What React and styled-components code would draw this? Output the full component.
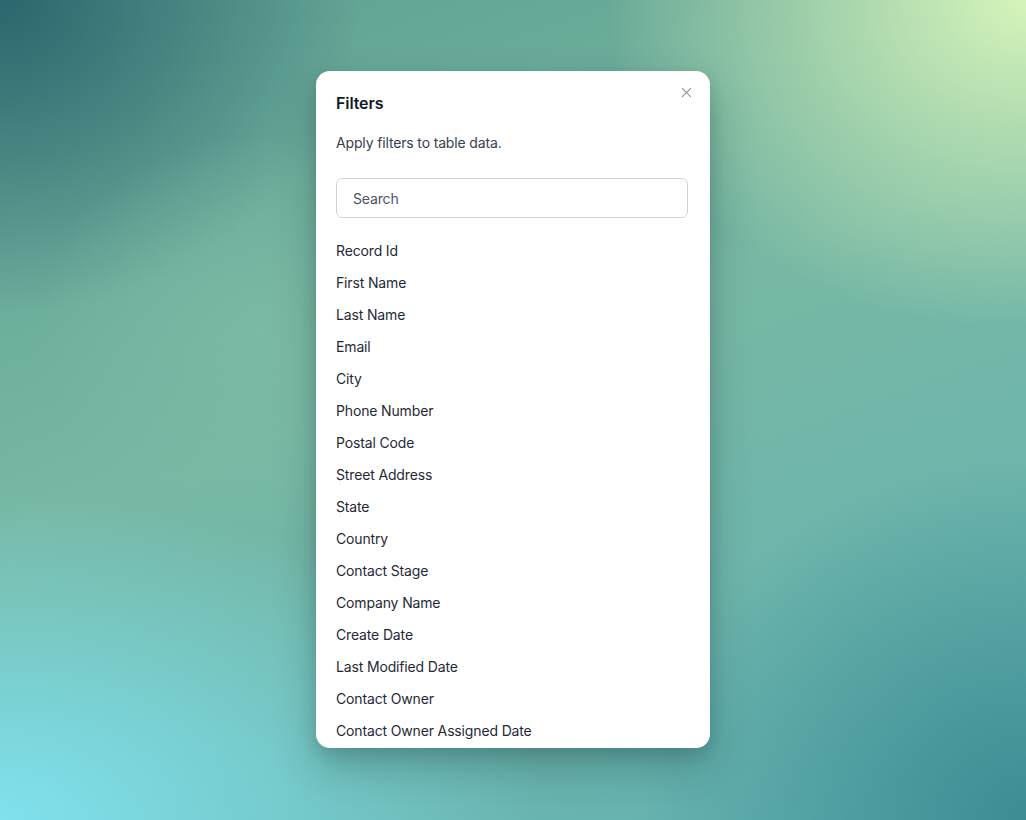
import React, { useState } from 'react'
import styled, { createGlobalStyle } from 'styled-components'

const GlobalStyle = createGlobalStyle`
  html, body {
    margin: 0;
    padding: 0;
    height: 100%;
  }
  body {
    font-family: 'Inter', 'Liberation Sans', sans-serif;
    -webkit-font-smoothing: antialiased;
  }
  #root {
    height: 100%;
  }
`

const Backdrop = styled.div`
  width: 1026px;
  height: 820px;
  display: flex;
  justify-content: center;
  align-items: flex-start;
  padding-top: 71px;
  box-sizing: border-box;
  overflow: hidden;
  background:
    radial-gradient(ellipse 300px 260px at 260px 330px, rgba(128, 190, 166, 0.6), rgba(128, 190, 166, 0) 75%),
    radial-gradient(ellipse 560px 440px at 1026px 0px, rgba(214, 244, 186, 1), rgba(214, 244, 186, 0) 75%),
    radial-gradient(ellipse 700px 420px at 0px 820px, rgba(128, 226, 238, 1), rgba(128, 226, 238, 0) 78%),
    radial-gradient(ellipse 480px 420px at 0px 0px, rgba(44, 102, 110, 1), rgba(44, 102, 110, 0) 75%),
    radial-gradient(ellipse 520px 480px at 1026px 820px, rgba(60, 140, 146, 1), rgba(60, 140, 146, 0) 75%),
    linear-gradient(160deg, #5e9e90 0%, #78b8a4 45%, #62b2b4 100%);
`

const Dialog = styled.div`
  position: relative;
  width: 394px;
  height: 677px;
  background: #ffffff;
  border-radius: 14px;
  box-shadow: 0 20px 40px rgba(20, 50, 50, 0.28), 0 6px 14px rgba(20, 50, 50, 0.14);
  padding: 20px 22px 0 20px;
  box-sizing: border-box;
  display: flex;
  flex-direction: column;
  overflow: hidden;
`

const CloseButton = styled.button`
  position: absolute;
  top: 13px;
  right: 16px;
  width: 16px;
  height: 16px;
  padding: 0;
  border: 0;
  background: none;
  color: #8b929c;
  display: flex;
  align-items: center;
  justify-content: center;
  cursor: pointer;
`

const Title = styled.h2`
  margin: 0;
  font-size: 16px;
  line-height: 24px;
  font-weight: 600;
  color: #111827;
  letter-spacing: -0.1px;
`

const Description = styled.p`
  margin: 18px 0 0;
  font-size: 14px;
  line-height: 20px;
  color: #374151;
  letter-spacing: -0.15px;
`

const SearchInput = styled.input`
  margin-top: 25px;
  height: 40px;
  width: 100%;
  box-sizing: border-box;
  border: 1px solid #d1d5db;
  border-radius: 6px;
  padding: 0 16px;
  font-family: inherit;
  font-size: 14px;
  color: #111827;
  outline: none;
  letter-spacing: -0.15px;

  &::placeholder {
    color: #4b5563;
  }
`

const FieldList = styled.ul`
  list-style: none;
  margin: 16px 0 0;
  padding: 0;
  display: flex;
  flex-direction: column;
`

const FieldItem = styled.li`
  height: 32px;
  display: flex;
  align-items: center;
  font-size: 14px;
  color: #1f2937;
  letter-spacing: -0.15px;
  cursor: pointer;
`

const fields = [
  'Record Id',
  'First Name',
  'Last Name',
  'Email',
  'City',
  'Phone Number',
  'Postal Code',
  'Street Address',
  'State',
  'Country',
  'Contact Stage',
  'Company Name',
  'Create Date',
  'Last Modified Date',
  'Contact Owner',
  'Contact Owner Assigned Date'
]

export default function App() {
  const [query, setQuery] = useState('')
  const shown = fields.filter((f) => f.toLowerCase().includes(query.toLowerCase()))

  return (
    <>
      <GlobalStyle />
      <Backdrop>
        <Dialog>
          <CloseButton aria-label='Close'>
            <svg width='11' height='11' viewBox='0 0 12 12' fill='none' stroke='currentColor' strokeWidth='1.2' strokeLinecap='round'>
              <path d='M1.5 1.5L10.5 10.5M10.5 1.5L1.5 10.5' />
            </svg>
          </CloseButton>
          <Title>Filters</Title>
          <Description>Apply filters to table data.</Description>
          <SearchInput
            type='text'
            placeholder='Search'
            value={query}
            onChange={(e) => setQuery(e.target.value)}
          />
          <FieldList>
            {shown.map((f) => (
              <FieldItem key={f}>{f}</FieldItem>
            ))}
          </FieldList>
        </Dialog>
      </Backdrop>
    </>
  )
}
